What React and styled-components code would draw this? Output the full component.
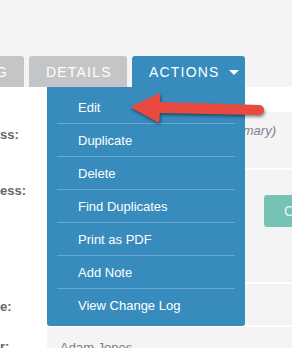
import React from 'react';
import styled, { createGlobalStyle } from 'styled-components';

const GlobalStyle = createGlobalStyle`
  html, body {
    margin: 0;
    padding: 0;
    background: #ffffff;
    font-family: "Liberation Sans", Arial, sans-serif;
    overflow: hidden;
  }
`;

const Page = styled.div`
  position: relative;
  width: 292px;
  height: 348px;
  overflow: hidden;
  background: #ffffff;
`;

const Header = styled.div`
  height: 87px;
  background: #f4f4f4;
  display: flex;
  align-items: flex-end;
  gap: 5px;
`;

const Tab = styled.div`
  position: relative;
  height: 31px;
  box-sizing: border-box;
  display: flex;
  align-items: center;
  justify-content: ${(p) => (p.$cut ? 'flex-end' : 'flex-start')};
  gap: 9px;
  padding: ${(p) => (p.$cut ? '0 16px 0 0' : '0 0 0 17px')};
  margin-left: ${(p) => (p.$cut ? '-40px' : '0')};
  width: ${(p) => p.$w}px;
  background: ${(p) => (p.$active ? '#378bbd' : '#c4c5c7')};
  color: #ffffff;
  font-size: 14px;
  letter-spacing: 1.2px;
  border-radius: 3px 3px 0 0;
  white-space: nowrap;
  overflow: hidden;
`;

const Caret = styled.span`
  width: 0;
  height: 0;
  border-left: 5px solid transparent;
  border-right: 5px solid transparent;
  border-top: 5px solid #ffffff;
  margin-top: 1px;
`;

const Menu = styled.ul`
  position: absolute;
  top: 87px;
  left: 47px;
  width: 198px;
  margin: 0;
  padding: 4px 0 5px;
  list-style: none;
  background: #378bbd;
  border-radius: 0 0 3px 3px;
  z-index: 2;
`;

const MenuItem = styled.li`
  margin: 0 10px;
  height: 32px;
  padding-left: 21px;
  display: flex;
  align-items: center;
  color: #ffffff;
  font-size: 13px;
  border-bottom: ${(p) => (p.$last ? 'none' : '1px solid #66a7d2')};
`;

const Body = styled.div`
  padding-top: 25px;
`;

const Row = styled.div`
  display: grid;
  grid-template-columns: 47px 1fr;
  height: ${(p) => p.$h}px;
`;

const Label = styled.div`
  background: #ffffff;
  text-align: right;
  padding-right: ${(p) => p.$pr}px;
  padding-top: ${(p) => p.$pt}px;
  font-size: 13px;
  font-weight: bold;
  color: #666670;
  white-space: nowrap;
  overflow: hidden;
`;

const Value = styled.div`
  background: #f4f4f4;
  border-bottom: 2px solid #ffffff;
  padding: ${(p) => p.$pt}px 0 0 13px;
  display: flex;
  align-items: flex-start;
  font-size: 13px;
  color: #7b7b88;
  white-space: nowrap;
  overflow: hidden;
`;

const Email = styled.span`
  width: 164px;
  flex-shrink: 0;
`;

const Note = styled.span`
  font-style: italic;
  color: #80808c;
`;

const Button = styled.div`
  margin-left: 204px;
  flex-shrink: 0;
  height: 32px;
  padding: 0 20px;
  box-sizing: border-box;
  display: flex;
  align-items: center;
  background: #76c2b4;
  color: #eaf7f4;
  font-size: 14px;
  border-radius: 3px;
`;

const Arrow = styled.svg`
  position: absolute;
  left: 125px;
  top: 88px;
  width: 145px;
  height: 40px;
  z-index: 3;
  overflow: visible;
  filter: drop-shadow(1px 2px 1.5px rgba(0, 0, 0, 0.45));
`;

const items = ['Edit', 'Duplicate', 'Delete', 'Find Duplicates', 'Print as PDF', 'Add Note', 'View Change Log'];

export default function App() {
  return (
    <Page>
      <GlobalStyle />
      <Header>
        <Tab $cut $w={64}>BILLING</Tab>
        <Tab $w={98}>DETAILS</Tab>
        <Tab $active $w={113}>
          ACTIONS
          <Caret />
        </Tab>
      </Header>

      <Body>
        <Row $h={58}>
          <Label $pr={30} $pt={15}>ss:</Label>
          <Value $pt={11}>
            <Email>adam.jones@mail.com</Email>
            <Note>(primary)</Note>
          </Value>
        </Row>
        <Row $h={114}>
          <Label $pr={25} $pt={13}>ess:</Label>
          <Value $pt={25}>
            <Button>Copy</Button>
          </Value>
        </Row>
        <Row $h={43}>
          <Label $pr={40} $pt={15}>e:</Label>
          <Value $pt={13} />
        </Row>
        <Row $h={40}>
          <Label $pr={39} $pt={12}>r:</Label>
          <Value $pt={13}>Adam Jones</Value>
        </Row>
      </Body>

      <Menu>
        {items.map((label, i) => (
          <MenuItem key={label} $last={i === items.length - 1}>
            {label}
          </MenuItem>
        ))}
      </Menu>

      <Arrow viewBox="0 0 145 40">
        <path
          d="M5 19 L35 5 L35 14 L134 17 A5 5 0 0 1 134 27 L35 25 L34 35 Z"
          fill="#e84a3f"
        />
      </Arrow>
    </Page>
  );
}
